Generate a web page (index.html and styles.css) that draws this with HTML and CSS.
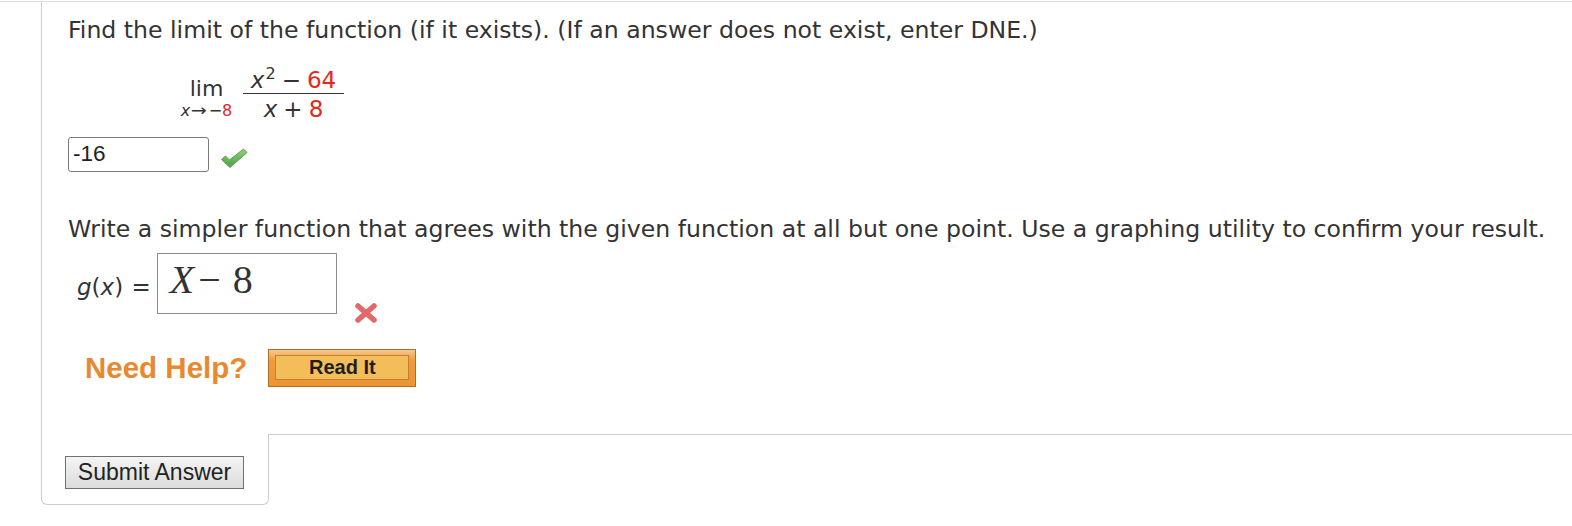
FILE: index.html
```html
<!DOCTYPE html>
<html>
<head>
<meta charset="utf-8">
<link rel="stylesheet" href="styles.css">
</head>
<body>
<div class="page">
  <div class="qbox">
    <div class="content">
      <p class="prompt">Find the limit of the function (if it exists). (If an answer does not exist, enter DNE.)</p>
      <div class="limit">
        <div class="lim">
          <span class="lim-word">lim</span>
          <span class="lim-sub"><i>x</i><span class="arrow">→</span>−<span class="red">8</span></span>
        </div>
        <div class="frac">
          <div class="num"><i>x</i><sup class="sq">2</sup><span class="op">−</span><span class="red">64</span></div>
          <div class="den"><i>x</i><span class="op">+</span><span class="red">8</span></div>
        </div>
      </div>
      <div class="answer-row">
        <div class="input">-16</div>
        <svg class="check" width="28" height="22" viewBox="0 0 28 22">
          <defs>
            <linearGradient id="cg" x1="0" y1="0" x2="0" y2="1">
              <stop offset="0" stop-color="#8fd27c"/>
              <stop offset="1" stop-color="#4f9e44"/>
            </linearGradient>
          </defs>
          <path d="M1.5 12.5 L5.5 9 L9.5 13 L23.5 2 L27 5.5 L10 20.5 Z" fill="url(#cg)" stroke="#5a9f4d" stroke-width="1" stroke-linejoin="round"/>
        </svg>
      </div>
      <p class="prompt second">Write a simpler function that agrees with the given function at all but one point. Use a graphing utility to confirm your result.</p>
      <div class="g-row">
        <span class="g-label"><i>g</i>(<i>x</i>) <span class="eq">=</span></span>
        <div class="math-box"><span class="mx">X</span><span class="mminus">−</span><span class="m8">8</span></div>
        <svg class="cross" width="24" height="20" viewBox="0 0 24 20">
          <path d="M4 3 L20 17 M20 3 L4 17" stroke="#e3686a" stroke-width="5.5" stroke-linecap="round"/>
        </svg>
      </div>
      <div class="help-row">
        <span class="need-help">Need Help?</span>
        <span class="read-it"><span class="read-inner">Read It</span></span>
      </div>
    </div>
  </div>
  <div class="footer">
    <div class="tab"><span class="submit">Submit Answer</span></div>
    <div class="rest"></div>
  </div>
</div>
</body>
</html>
```
FILE: styles.css
```css
html, body {
  margin: 0;
  padding: 0;
  background: #ffffff;
}
body {
  font-family: "DejaVu Sans", Verdana, sans-serif;
  color: #333333;
}
.page {
  margin-top: 1px;
  border-top: 1px solid #dcdcdc;
}
.qbox {
  margin-left: 41px;
  border-left: 1px solid #cccccc;
  height: 432px;
}
.content {
  padding: 15px 0 0 26px;
}
.prompt {
  margin: 0;
  font-size: 23.6px;
  line-height: 27px;
  white-space: nowrap;
}
.prompt.second {
  margin-top: 44px;
}
.red {
  color: #e5281d;
}
.limit {
  display: flex;
  align-items: flex-start;
  margin: 23px 0 0 109px;
  font-size: 23px;
}
.lim {
  display: flex;
  flex-direction: column;
  align-items: center;
  margin-top: 10px;
  width: 59px;
}
.lim-word {
  font-size: 22px;
  line-height: 24px;
}
.lim-sub {
  font-size: 16px;
  line-height: 19px;
  white-space: nowrap;
}
.arrow {
  display: inline-block;
  transform: scaleX(1.2);
  margin: 0 3px 0 2px;
}
.frac {
  display: flex;
  flex-direction: column;
  align-items: center;
  margin-left: 7px;
  width: 101px;
}
.num {
  line-height: 26px;
  height: 26px;
  border-bottom: 1px solid #333333;
  width: 100%;
  text-align: center;
  white-space: nowrap;
}
.sq {
  font-size: 16px;
  line-height: 0;
  vertical-align: 9px;
  margin-left: 1px;
}
.op {
  margin: 0 6px;
}
.den {
  line-height: 26px;
  padding-top: 2px;
  white-space: nowrap;
}
.answer-row {
  display: flex;
  align-items: flex-start;
  margin-top: 15px;
}
.input {
  box-sizing: border-box;
  width: 141px;
  height: 35px;
  border: 1px solid #7a7a7a;
  border-radius: 3px;
  font-family: "Liberation Sans", Arial, sans-serif;
  font-size: 22.5px;
  line-height: 32px;
  padding-left: 4px;
  color: #222222;
}
.check {
  margin: 10px 0 0 11px;
}
.g-row {
  display: flex;
  align-items: flex-start;
  margin-top: 10px;
}
.g-label {
  font-size: 23px;
  line-height: 26px;
  margin: 21px 0 0 9px;
  white-space: nowrap;
}
.eq {
  margin-left: 1px;
}
.math-box {
  box-sizing: border-box;
  width: 180px;
  height: 61px;
  margin-left: 6px;
  border: 1px solid #8c8c8c;
  padding: 6px 0 0 12px;
  font-family: "Liberation Serif", "Times New Roman", serif;
  font-size: 40px;
  line-height: 40px;
  color: #333333;
  white-space: nowrap;
}
.mx {
  font-style: italic;
}
.mminus {
  margin: 0 12px 0 4px;
}
.cross {
  margin: 50px 0 0 17px;
}
.help-row {
  display: flex;
  align-items: flex-start;
  margin-top: 26px;
}
.need-help {
  font-family: "Liberation Sans", Arial, sans-serif;
  font-weight: bold;
  font-size: 29.5px;
  line-height: 38px;
  color: #e8892f;
  margin-left: 17px;
}
.read-it {
  box-sizing: border-box;
  display: block;
  width: 148px;
  height: 38px;
  margin-left: 21px;
  border: 1px solid #b06d27;
  padding: 5px 6px 6px 6px;
  background: linear-gradient(#f6c98a, #ee9a3c 30%, #ec9535);
}
.read-inner {
  box-sizing: border-box;
  display: block;
  height: 25px;
  border: 1px solid #c57f33;
  background: #f3bd5a;
  font-family: "Liberation Sans", Arial, sans-serif;
  font-weight: bold;
  font-size: 20px;
  line-height: 23px;
  text-align: center;
  color: #1e1e1e;
}
.footer {
  display: flex;
}
.tab {
  box-sizing: border-box;
  margin-left: 41px;
  width: 228px;
  height: 71px;
  border: 1px solid #cccccc;
  border-top: none;
  border-radius: 0 0 6px 6px;
  padding: 22px 0 0 23px;
}
.rest {
  flex: 1;
  border-top: 1px solid #cccccc;
}
.submit {
  box-sizing: border-box;
  display: block;
  width: 179px;
  height: 33px;
  border: 1px solid #707070;
  background: linear-gradient(#f4f4f4, #dcdcdc);
  font-family: "Liberation Sans", Arial, sans-serif;
  font-size: 23px;
  line-height: 31px;
  text-align: center;
  color: #222222;
}
```
